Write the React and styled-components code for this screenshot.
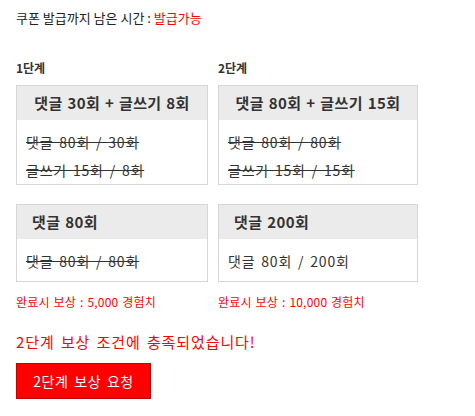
import React from 'react';
import styled, { createGlobalStyle } from 'styled-components';

const GlobalStyle = createGlobalStyle`
  body {
    margin: 0;
    background: #fff;
    font-family: "Noto Sans CJK KR", "Noto Sans", sans-serif;
    color: #333;
  }
`;

const Page = styled.div`
  padding: 9px 16px 16px;
`;

const Remain = styled.p`
  margin: 0;
  font-size: 13px;
  line-height: 18px;
  color: #222;

  em {
    font-style: normal;
    color: #ff0000;
  }
`;

const Steps = styled.div`
  display: flex;
  gap: 10px;
  margin-top: 32px;
`;

const Column = styled.div`
  width: ${props => props.width}px;
  display: flex;
  flex-direction: column;
`;

const StepLabel = styled.h3`
  margin: 0 0 8px;
  font-size: 12px;
  line-height: 18px;
  font-weight: 700;
  color: #333;
`;

const Card = styled.div`
  border: 1px solid #d6d6d6;
  background: #fff;
  margin-bottom: ${props => props.isLast ? '0' : '19px'};
`;

const CardHead = styled.div`
  height: 34px;
  line-height: 34px;
  background: #ebebeb;
  font-size: 15px;
  font-weight: 700;
  letter-spacing: 0.4px;
  word-spacing: 1px;
  color: #333;
  padding: 0 15px;
  text-align: ${props => props.center ? 'center' : 'left'};
  white-space: nowrap;
`;

const CardBody = styled.div`
  box-sizing: border-box;
  min-height: 42px;
  padding: 8px 9px 0;
`;

const Row = styled.div`
  height: 28px;
  line-height: 28px;
  font-size: 14px;
  letter-spacing: 0.8px;
  word-spacing: 2px;
  color: #333;
  text-decoration: ${props => props.done ? 'line-through' : 'none'};
`;

const Reward = styled.p`
  margin: 12px 0 0;
  font-size: 12px;
  line-height: 16px;
  letter-spacing: 0.2px;
  word-spacing: 1px;
  color: #ff0000;
`;

const Notice = styled.p`
  margin: 22px 0 0;
  font-size: 15px;
  line-height: 20px;
  letter-spacing: 0.9px;
  word-spacing: 2px;
  color: #ff0000;
`;

const RequestButton = styled.button`
  margin-top: 11px;
  width: 135px;
  height: 36px;
  padding: 0;
  background: #ff0000;
  border: 1px solid #c40000;
  color: #fff;
  font-family: inherit;
  font-size: 14px;
  letter-spacing: 0.6px;
  word-spacing: 2px;
  cursor: pointer;
`;

const steps = [
  {
    label: '1단계',
    width: 192,
    reward: '완료시 보상 : 5,000 경험치',
    cards: [
      { title: '댓글 30회 + 글쓰기 8회', rows: [['댓글 80회 / 30회', true], ['글쓰기 15회 / 8회', true]], center: true },
      { title: '댓글 80회', rows: [['댓글 80회 / 80회', true]] },
    ],
  },
  {
    label: '2단계',
    width: 200,
    reward: '완료시 보상 : 10,000 경험치',
    cards: [
      { title: '댓글 80회 + 글쓰기 15회', rows: [['댓글 80회 / 80회', true], ['글쓰기 15회 / 15회', true]], center: true },
      { title: '댓글 200회', rows: [['댓글 80회 / 200회', false]] },
    ],
  },
];

export default function App() {
  return (
    <Page>
      <GlobalStyle />
      <Remain>쿠폰 발급까지 남은 시간 : <em>발급가능</em></Remain>
      <Steps>
        {steps.map(step => (
          <Column key={step.label} width={step.width}>
            <StepLabel>{step.label}</StepLabel>
            {step.cards.map((card, i) => (
              <Card key={card.title} isLast={i === step.cards.length - 1}>
                <CardHead center={card.center}>{card.title}</CardHead>
                <CardBody>
                  {card.rows.map(([text, done]) => (
                    <Row key={text} done={done}>{text}</Row>
                  ))}
                </CardBody>
              </Card>
            ))}
            <Reward>{step.reward}</Reward>
          </Column>
        ))}
      </Steps>
      <Notice>2단계 보상 조건에 충족되었습니다!</Notice>
      <RequestButton>2단계 보상 요청</RequestButton>
    </Page>
  );
}
